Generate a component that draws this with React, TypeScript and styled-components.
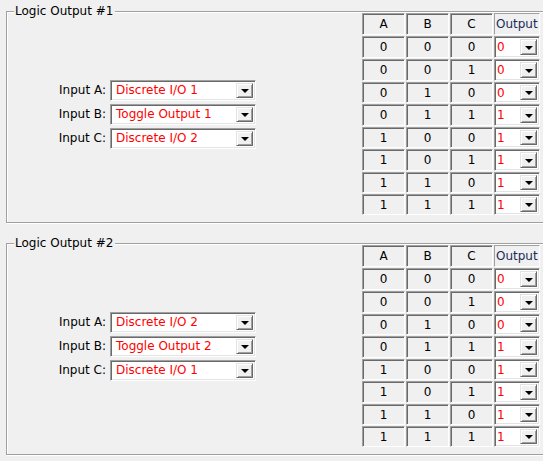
import React from "react";
import styled, { createGlobalStyle } from "styled-components";

const Global = createGlobalStyle`
  html, body { margin: 0; padding: 0; background: #f0f0f0; overflow: hidden; }
  body { font-family: "DejaVu Sans", "Liberation Sans", sans-serif; font-size: 12px; color: #000; }
`;

const Page = styled.div`
  width: 543px;
  height: 461px;
  overflow: hidden;
  display: flex;
  flex-direction: column;
  gap: 20px;
  padding: 11px 0 0 6px;
  box-sizing: border-box;
`;

const Group = styled.section`
  position: relative;
  width: 545px;
  flex: 0 0 auto;
  border: 1px solid #a0a0a0;
  box-shadow: inset 1px 1px 0 #fff, 1px 1px 0 #fff;
  box-sizing: border-box;
`;

const Legend = styled.span`
  position: absolute;
  top: -8px;
  left: 7px;
  padding: 0 2px 0 1px;
  background: #f0f0f0;
  line-height: 15px;
  color: #000;
`;

const Content = styled.div`
  display: flex;
  align-items: center;
  padding: 1px 0 7px 0;
`;

const InputGrid = styled.div`
  display: grid;
  grid-template-columns: 56px 146px;
  column-gap: 4px;
  row-gap: 3px;
  align-items: center;
  margin-left: 43px;
  margin-right: 106px;
`;

const Label = styled.span`
  justify-self: end;
  white-space: nowrap;
`;

const Combo = styled.div<{ $compact?: boolean }>`
  display: flex;
  align-items: stretch;
  height: ${(p) => (p.$compact ? "100%" : "21px")};
  background: #fff;
  border-top: 1px solid #a0a0a0;
  border-left: 1px solid #a0a0a0;
  border-bottom: 1px solid #fff;
  border-right: 1px solid #fff;
  box-shadow: inset 1px 1px 0 #696969, inset -1px -1px 0 #e3e3e3;
  box-sizing: border-box;
`;

const ComboText = styled.span<{ $pad?: number }>`
  flex: 1;
  display: flex;
  align-items: center;
  padding-left: ${(p) => p.$pad ?? 5}px;
  color: #ff0000;
  white-space: nowrap;
  overflow: hidden;
`;

const DropButton = styled.span<{ $w?: number }>`
  flex: 0 0 ${(p) => p.$w ?? 17}px;
  margin: 2px 2px 2px 0;
  display: flex;
  align-items: center;
  justify-content: center;
  background: #f0f0f0;
  border-top: 1px solid #e3e3e3;
  border-left: 1px solid #e3e3e3;
  border-bottom: 1px solid #696969;
  border-right: 1px solid #696969;
  box-shadow: inset 1px 1px 0 #fff, inset -1px -1px 0 #a0a0a0;
  box-sizing: border-box;
`;

const Arrow = styled.span`
  width: 0;
  height: 0;
  border-left: 4px solid transparent;
  border-right: 4px solid transparent;
  border-top: 4px solid #000;
  margin-top: 1px;
`;

const Table = styled.div`
  display: grid;
  grid-template-columns: 43px 43px 43px 46px;
  grid-template-rows: 22px 22px 22px 21px 22px 21px 22px 21px 21px;
  column-gap: 1px;
  row-gap: 1px;
  flex: 0 0 auto;
`;

const Cell = styled.div<{ $header?: boolean }>`
  display: flex;
  align-items: center;
  justify-content: ${(p) => (p.$header ? "center" : "center")};
  background: #f0f0f0;
  border-top: 1px solid #a0a0a0;
  border-left: 1px solid #a0a0a0;
  border-bottom: 1px solid #fff;
  border-right: 1px solid #fff;
  box-shadow: inset 1px 1px 0 #696969;
  box-sizing: border-box;
  color: #000;
`;

const OutHeader = styled(Cell)`
  justify-content: flex-start;
  padding-left: 1px;
  color: #1a2a5a;
  box-shadow: none;
  overflow: hidden;
  white-space: nowrap;
`;

type GroupData = {
  title: string;
  inputs: [string, string][];
};

const rows = [
  [0, 0, 0, 0],
  [0, 0, 1, 0],
  [0, 1, 0, 0],
  [0, 1, 1, 1],
  [1, 0, 0, 1],
  [1, 0, 1, 1],
  [1, 1, 0, 1],
  [1, 1, 1, 1],
];

const groups: GroupData[] = [
  {
    title: "Logic Output #1",
    inputs: [
      ["Input A:", "Discrete I/O 1"],
      ["Input B:", "Toggle Output 1"],
      ["Input C:", "Discrete I/O 2"],
    ],
  },
  {
    title: "Logic Output #2",
    inputs: [
      ["Input A:", "Discrete I/O 2"],
      ["Input B:", "Toggle Output 2"],
      ["Input C:", "Discrete I/O 1"],
    ],
  },
];

function LogicGroup({ data }: { data: GroupData }) {
  return (
    <Group>
      <Legend>{data.title}</Legend>
      <Content>
        <InputGrid>
          {data.inputs.map(([label, value]) => (
            <React.Fragment key={label}>
              <Label>{label}</Label>
              <Combo>
                <ComboText>{value}</ComboText>
                <DropButton>
                  <Arrow />
                </DropButton>
              </Combo>
            </React.Fragment>
          ))}
        </InputGrid>
        <Table>
          <Cell $header>A</Cell>
          <Cell $header>B</Cell>
          <Cell $header>C</Cell>
          <OutHeader>Output</OutHeader>
          {rows.map((r, i) => (
            <React.Fragment key={i}>
              <Cell>{r[0]}</Cell>
              <Cell>{r[1]}</Cell>
              <Cell>{r[2]}</Cell>
              <Combo $compact>
                <ComboText $pad={2}>{r[3]}</ComboText>
                <DropButton $w={17}>
                  <Arrow />
                </DropButton>
              </Combo>
            </React.Fragment>
          ))}
        </Table>
      </Content>
    </Group>
  );
}

export default function App() {
  return (
    <>
      <Global />
      <Page>
        {groups.map((g) => (
          <LogicGroup key={g.title} data={g} />
        ))}
      </Page>
    </>
  );
}
